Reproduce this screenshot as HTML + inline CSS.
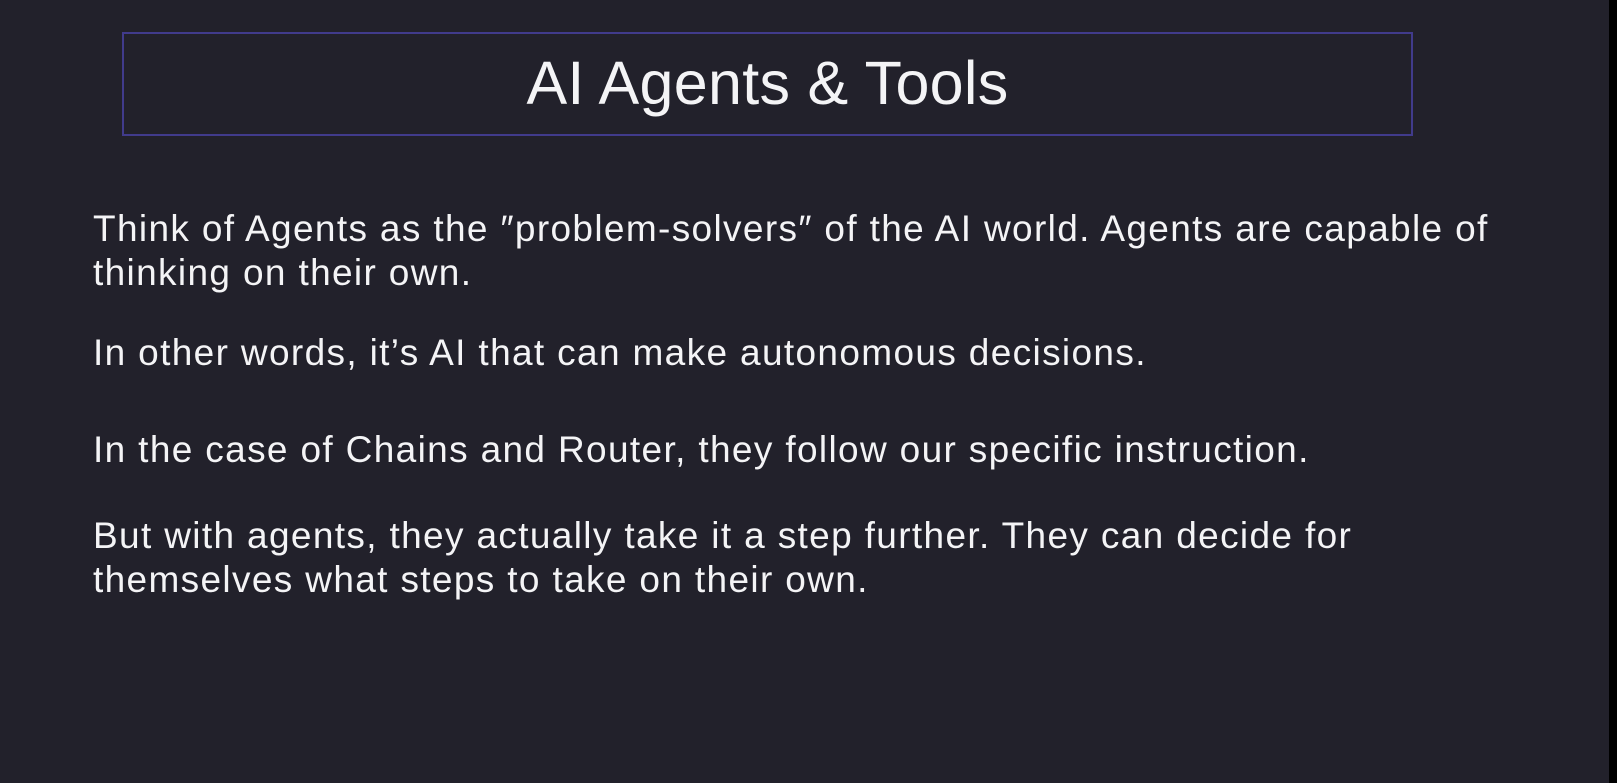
<!DOCTYPE html>
<html><head><meta charset="utf-8"><style>
html,body{margin:0;padding:0;}
body{width:1617px;height:783px;background:#22212b;position:relative;overflow:hidden;font-family:"Liberation Sans",sans-serif;color:#f4f4f6;}
.bar{position:absolute;left:1609px;top:0;width:8px;height:783px;background:#000;}
.box{position:absolute;left:122px;top:32px;width:1287px;height:100px;border:2px solid #413b8c;}
.title{position:absolute;left:122px;width:1291px;top:48px;text-align:center;font-size:61px;line-height:70px;letter-spacing:0.3px;}
.p{position:absolute;left:93px;font-size:37px;line-height:44px;white-space:nowrap;letter-spacing:1.35px;}
</style></head><body>
<div class="bar"></div>
<div class="box"></div>
<div class="title">AI Agents &amp; Tools</div>
<div class="p" style="top:207px">Think of Agents as the ″problem-solvers″ of the AI world. Agents are capable of<br>thinking on their own.</div>
<div class="p" style="top:331px">In other words, it’s AI that can make autonomous decisions.</div>
<div class="p" style="top:428px">In the case of Chains and Router, they follow our specific instruction.</div>
<div class="p" style="top:514px">But with agents, they actually take it a step further. They can decide for<br>themselves what steps to take on their own.</div>
</body></html>
